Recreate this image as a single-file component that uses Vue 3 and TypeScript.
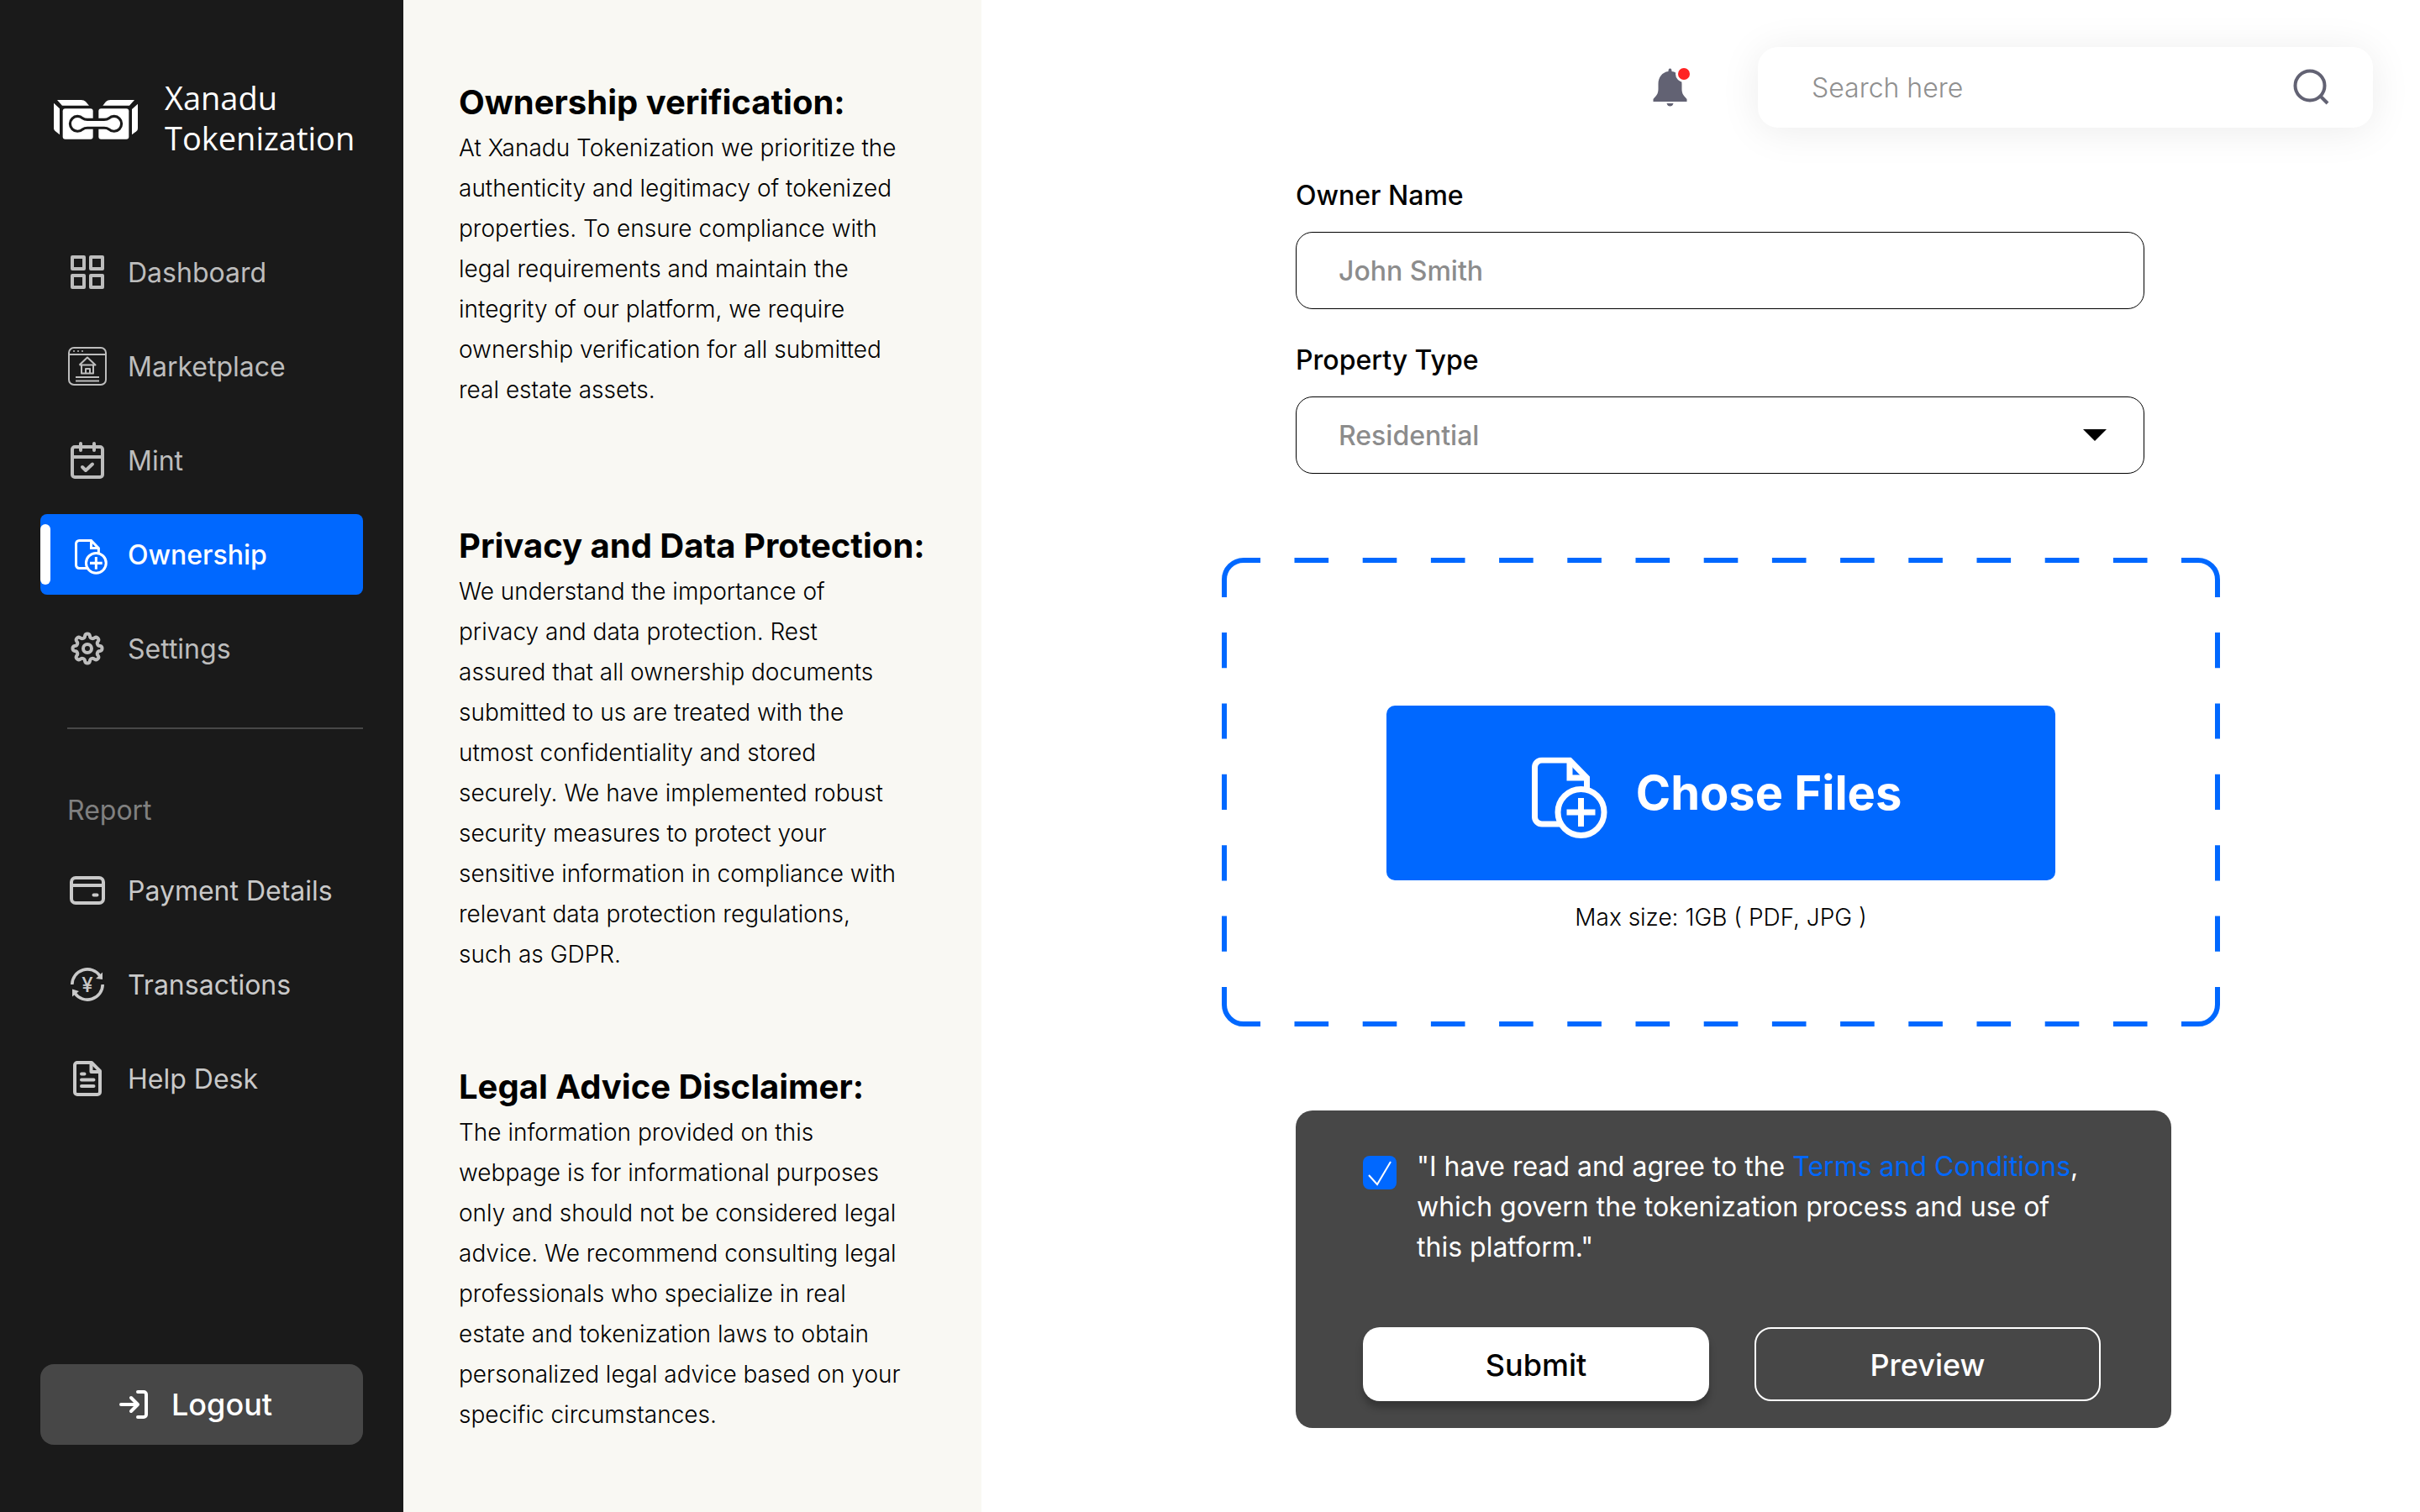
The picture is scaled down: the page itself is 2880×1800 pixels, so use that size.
<script setup lang="ts">
import { ref } from 'vue'

interface Section {
  title: string
  body: string
}

const search = ref('')
const ownerName = ref('')
const propertyType = ref('Residential')
const propertyTypes = ['Residential', 'Commercial', 'Industrial', 'Land']
const agreed = ref(true)

const sections: Section[] = [
  {
    title: 'Ownership verification:',
    body: 'At Xanadu Tokenization we prioritize the authenticity and legitimacy of tokenized properties. To ensure compliance with legal requirements and maintain the integrity of our platform, we require ownership verification for all submitted real estate assets.',
  },
  {
    title: 'Privacy and Data Protection:',
    body: 'We understand the importance of privacy and data protection. Rest assured that all ownership documents submitted to us are treated with the utmost confidentiality and stored securely. We have implemented robust security measures to protect your sensitive information in compliance with relevant data protection regulations, such as GDPR.',
  },
  {
    title: 'Legal Advice Disclaimer:',
    body: 'The information provided on this webpage is for informational purposes only and should not be considered legal advice. We recommend consulting legal professionals who specialize in real estate and tokenization laws to obtain personalized legal advice based on your specific circumstances.',
  },
]

/** Outline of an eight-lobed gear centred in a 48 unit box. */
function gearPath(): string {
  const point = (deg: number): string => {
    const a = (deg * Math.PI) / 180
    return `${(24 + 15.4 * Math.sin(a)).toFixed(2)} ${(24 - 15.4 * Math.cos(a)).toFixed(2)}`
  }
  let d = `M${point(-11)}`
  for (let k = 0; k < 8; k++) {
    d += `A3 3 0 0 1 ${point(k * 45 + 11)}A3.3 3.3 0 0 0 ${point(k * 45 + 34)}`
  }
  return d + 'Z'
}
const gear = gearPath()
</script>

<template>
  <div class="page">
    <svg class="defs" aria-hidden="true">
      <symbol id="file-plus" viewBox="0 0 90 97">
        <g fill="none" stroke="currentColor" stroke-width="7">
          <path d="M65.5 37V24.5L45 3.5H12A8.500 8.500 0 0 0 3.500 12V71A8.500 8.500 0 0 0 12 79.500H34" />
          <path d="M45 3.500V24.500H65.500" />
          <circle cx="58.500" cy="65.500" r="27.500" />
          <path d="M58.500 48.500V82.500M41.500 65.500H75.500" />
        </g>
      </symbol>
    </svg>

    <aside class="sidebar">
      <div class="brand">
        <svg class="brand-mark" viewBox="192 174 300 144" aria-hidden="true">
          <g fill="#fff">
            <path d="M204 177H290Q300 177 306 183L318 197H222Z" />
            <path d="M480 177H394Q384 177 378 183L367 197H462Z" />
            <path d="M192 188L213 208V301L197 288Q192 284 192 278Z" />
            <path d="M492 191L471 210V301L487 289Q492 285 492 278Z" />
            <rect x="224" y="208" width="108" height="109" rx="9" />
            <rect x="352" y="208" width="108" height="109" rx="9" />
            <path
              d="M292 246Q300 252 312 252H372Q384 252 392 246A22 22 0 1 1 392 278Q384 272 372 272H312Q300 272 292 278A22 22 0 1 1 292 246Z"
              stroke="#1a1a1a" stroke-width="19" paint-order="stroke"
            />
          </g>
        </svg>
        <div class="brand-name">Xanadu<br />Tokenization</div>
      </div>

      <nav class="nav" aria-label="Main">
        <a class="nav-item" href="#dashboard">
          <svg class="icon" viewBox="0 0 48 48" aria-hidden="true">
            <g stroke-width="4" stroke-linejoin="round">
              <rect x="6" y="6" width="14" height="14" /><rect x="28" y="6" width="14" height="14" />
              <rect x="6" y="28" width="14" height="14" /><rect x="28" y="28" width="14" height="14" />
            </g>
          </svg>
          Dashboard
        </a>
        <a class="nav-item" href="#marketplace">
          <svg class="icon" viewBox="0 0 48 48" aria-hidden="true">
            <g stroke-width="2">
              <rect x="2" y="2" width="44" height="44" rx="6" />
              <path d="M2 10H46M10 37H38M10 41.500H38" />
              <path d="M14.500 22.500L24 13.500L33.500 22.500H14.500M17 22.500V32.500H31V22.500M22 32V27H27V32" stroke-linejoin="round" />
              <path d="M8 6H8.010M13 6H13.010M18 6H18.010" stroke-linecap="round" />
            </g>
          </svg>
          Marketplace
        </a>
        <a class="nav-item" href="#mint">
          <svg class="icon" viewBox="0 0 48 48" aria-hidden="true">
            <g stroke-width="4" stroke-linecap="round" stroke-linejoin="round">
              <rect x="6" y="8" width="36" height="36" rx="3" />
              <path d="M6 20H42M16 4V12M32 4V12M18 32L22 36L30 28.500" />
            </g>
          </svg>
          Mint
        </a>
        <a class="nav-item active" href="#ownership" aria-current="page">
          <svg class="icon" viewBox="0 0 48 48" aria-hidden="true">
            <use href="#file-plus" x="9" y="6" width="39" height="42" />
          </svg>
          Ownership
        </a>
        <a class="nav-item" href="#settings">
          <svg class="icon" viewBox="0 0 48 48" aria-hidden="true">
            <g stroke-width="4">
              <path :d="gear" stroke-linejoin="round" />
              <circle cx="24" cy="24" r="5" />
            </g>
          </svg>
          Settings
        </a>
      </nav>

      <hr class="rule" />
      <h2 class="group">Report</h2>

      <nav class="nav" aria-label="Report">
        <a class="nav-item bright" href="#payment">
          <svg class="icon" viewBox="0 0 48 48" aria-hidden="true">
            <g stroke-width="4" stroke-linecap="round">
              <rect x="5" y="9" width="38" height="30" rx="5" />
              <path d="M5 18H43M31.500 29.500H35.500" />
            </g>
          </svg>
          Payment Details
        </a>
        <a class="nav-item bright" href="#transactions">
          <svg class="icon" viewBox="0 0 48 48" aria-hidden="true">
            <path d="M5.800 24A18.200 18.200 0 0 1 39 13.800M42.200 24A18.200 18.200 0 0 1 9 34.200" stroke-width="3.600" />
            <path d="M42 9.500V18L34 17ZM6 38.500V29.500L14 32Z" class="solid" />
            <text x="24" y="33" class="yen">¥</text>
          </svg>
          Transactions
        </a>
        <a class="nav-item bright" href="#help">
          <svg class="icon" viewBox="0 0 48 48" aria-hidden="true">
            <g stroke-width="4" stroke-linecap="round" stroke-linejoin="round">
              <path d="M29 5H12A3 3 0 0 0 9 8V40A3 3 0 0 0 12 43H36A3 3 0 0 0 39 40V15Z" />
              <path d="M28.500 6V16H38M17 18.500H20.500M17 25.500H31.500M17 33H31.500" />
            </g>
          </svg>
          Help Desk
        </a>
      </nav>

      <button class="logout" type="button">
        <svg class="logout-icon" viewBox="0 0 34 34" aria-hidden="true">
          <path d="M22 2H29A3 3 0 0 1 32 5V29A3 3 0 0 1 29 32H22M2 17H21M14 9L22 17L14 25" />
        </svg>
        Logout
      </button>
    </aside>

    <section class="info">
      <article v-for="s in sections" :key="s.title" class="info-block">
        <h2>{{ s.title }}</h2>
        <p>{{ s.body }}</p>
      </article>
    </section>

    <main class="main">
      <header class="topbar">
        <button class="bell" type="button" aria-label="Notifications">
          <svg viewBox="0 0 48 48" aria-hidden="true">
            <path
              fill="#626273"
              d="M21.500 1.500C23 1.500 23.500 3 23.500 5C31 6 35.500 12 35.500 20V26C35.500 32 38 34 41.500 38V41H1.500V38C5 34 7.500 32 7.500 26V20C7.500 12 12 6 19.500 5C19.500 3 20 1.500 21.500 1.500ZM17.500 43H25.500Q24.500 46.500 21.500 46.500Q18.500 46.500 17.500 43Z"
            />
            <circle cx="38" cy="8" r="10" fill="#fff" />
            <circle cx="38" cy="8" r="7" fill="#ff2323" />
          </svg>
        </button>
        <label class="search">
          <input v-model="search" type="search" placeholder="Search here" aria-label="Search here" />
          <svg viewBox="0 0 44 44" aria-hidden="true">
            <circle cx="20" cy="20" r="17.500" /><path d="M32.500 32.500L41 41" />
          </svg>
        </label>
      </header>

      <form class="form" @submit.prevent>
        <div class="field">
          <label for="owner">Owner Name</label>
          <input id="owner" v-model="ownerName" class="control" type="text" placeholder="John Smith" />
        </div>
        <div class="field">
          <label for="ptype">Property Type</label>
          <div class="select-wrap">
            <select id="ptype" v-model="propertyType" class="control">
              <option v-for="t in propertyTypes" :key="t">{{ t }}</option>
            </select>
            <svg class="caret" viewBox="0 0 28 14" aria-hidden="true"><path d="M0 0H28L14 14Z" /></svg>
          </div>
        </div>

        <div class="drop">
          <svg class="drop-frame" viewBox="0 0 1188 558" preserveAspectRatio="none" aria-hidden="true">
            <path d="M46 3H26A23 23 0 0 0 3 26V47M1142 3H1162A23 23 0 0 1 1185 26V47M46 555H26A23 23 0 0 1 3 532V511M1142 555H1162A23 23 0 0 0 1185 532V511" />
            <path d="M86.500 3H1101.500M86.500 555H1101.500" stroke-dasharray="40.600" />
            <path d="M3 89V469M1185 89V469" stroke-dasharray="42.200" />
          </svg>
          <button class="choose" type="button">
            <svg viewBox="0 0 90 97" aria-hidden="true"><use href="#file-plus" /></svg>
            Chose Files
          </button>
          <p class="hint">Max size: 1GB ( PDF, JPG )</p>
        </div>

        <div class="consent">
          <div class="agree">
            <span class="tick">
              <input id="agree" v-model="agreed" type="checkbox" />
              <svg v-if="agreed" viewBox="0 0 40 40" aria-hidden="true"><path d="M7 23L17 34L33 7" /></svg>
            </span>
            <label for="agree">"I have read and agree to the <a href="#terms">Terms and Conditions</a>, which govern the tokenization process and use of this platform."</label>
          </div>
          <div class="actions">
            <button class="btn solid-btn" type="submit">Submit</button>
            <button class="btn line-btn" type="button">Preview</button>
          </div>
        </div>
      </form>
    </main>
  </div>
</template>

<style>
body {
  margin: 0;
  background: #fff;
}
</style>

<style scoped>
.page {
  display: flex;
  min-height: 100vh;
  font-family: Inter, 'Liberation Sans', sans-serif;
  color: #000;
}
.page *,
.page {
  box-sizing: border-box;
}
button,
input,
select {
  font: inherit;
  color: inherit;
  margin: 0;
}
button {
  cursor: pointer;
  border: 0;
  padding: 0;
  background: none;
}
h2,
p {
  margin: 0;
}
.defs {
  position: absolute;
  width: 0;
  height: 0;
}

/* Sidebar */
.sidebar {
  flex: 0 0 480px;
  min-width: 0;
  display: flex;
  flex-direction: column;
  padding: 92px 48px 80px;
  background: #1a1a1a;
}
.brand {
  display: flex;
  align-items: center;
  gap: 32px;
  padding-left: 16px;
  margin-bottom: 88px;
}
.brand-mark {
  flex: none;
  width: 100px;
  height: 48px;
  margin-top: 4px;
}
.brand-name {
  font-family: 'Open Sans', 'Noto Sans', sans-serif;
  font-size: 38px;
  line-height: 48px;
  font-weight: 400;
  color: #fff;
}
.nav {
  display: flex;
  flex-direction: column;
  gap: 16px;
}
.nav-item {
  position: relative;
  display: flex;
  align-items: center;
  gap: 24px;
  height: 96px;
  padding-left: 32px;
  border-radius: 8px;
  font-size: 32px;
  font-weight: 400;
  color: #bdbdbd;
  text-decoration: none;
  white-space: nowrap;
}
.nav-item.bright {
  color: #c9c9c9;
}
.nav-item.active {
  background: #0068ff;
  color: #fff;
  font-weight: 500;
}
.nav-item.active::before {
  content: '';
  position: absolute;
  left: 0;
  top: 12px;
  width: 12px;
  height: 72px;
  border-radius: 6px;
  background: #fff;
}
.icon {
  width: 48px;
  height: 48px;
  fill: none;
  stroke: currentColor;
}
.icon .solid {
  fill: currentColor;
  stroke: none;
}
.yen {
  fill: currentColor;
  stroke: none;
  font-size: 24px;
  font-weight: 500;
  text-anchor: middle;
}
.rule {
  width: 352px;
  height: 2px;
  margin: 46px 0 73px 32px;
  border: 0;
  background: #484848;
}
.group {
  padding-left: 32px;
  margin-bottom: 23px;
  font-size: 32px;
  line-height: 48px;
  font-weight: 400;
  color: #808080;
}
.logout {
  display: flex;
  align-items: center;
  gap: 28px;
  height: 96px;
  margin-top: auto;
  padding-left: 94px;
  border-radius: 16px;
  background: #474747;
  color: #fff;
  font-size: 36px;
  font-weight: 500;
}
.logout-icon {
  width: 34px;
  height: 34px;
  fill: none;
  stroke: #fff;
  stroke-width: 4;
  stroke-linecap: round;
  stroke-linejoin: round;
}

/* Explanatory column */
.info {
  flex: 0 0 688px;
  min-width: 0;
  padding: 92px 64px 80px 66px;
  background: #f9f8f3;
}
.info-block + .info-block {
  margin-top: 132px;
}
.info-block:last-child {
  margin-top: 104px;
}
.info h2 {
  font-size: 40px;
  line-height: 60px;
  font-weight: 700;
  white-space: nowrap;
}
.info p {
  max-width: 532px;
  font-size: 28px;
  line-height: 48px;
  font-weight: 300;
}

/* Main area */
.main {
  flex: 1;
  min-width: 0;
  padding: 56px 56px 100px 286px;
}
.topbar {
  display: flex;
  justify-content: flex-end;
  align-items: center;
  gap: 78px;
  margin-bottom: 61px;
}
.bell svg {
  display: block;
  width: 48px;
  height: 48px;
}
.search {
  display: flex;
  align-items: center;
  width: 732px;
  height: 96px;
  padding: 0 51px 0 64px;
  border-radius: 24px;
  background: #fff;
  box-shadow: 0 4px 48px rgba(0, 0, 0, 0.08);
}
.search input {
  flex: 1;
  min-width: 0;
  padding: 0;
  border: 0;
  outline: 0;
  background: none;
  font-size: 32px;
  font-weight: 300;
  appearance: none;
}
.search input::placeholder {
  color: #909090;
}
.search svg {
  width: 44px;
  height: 44px;
  fill: none;
  stroke: #626273;
  stroke-width: 4;
}
.form {
  margin-right: 182px;
}
.field {
  display: flex;
  flex-direction: column;
  gap: 23px;
  margin: 0 90px 41px 88px;
}
.field label {
  font-size: 32px;
  line-height: 40px;
  font-weight: 500;
}
.control {
  display: block;
  width: 100%;
  height: 92px;
  padding: 0 50px;
  border: 1px solid #000;
  border-radius: 20px;
  background: #fff;
  font-size: 32px;
  font-weight: 500;
  color: #8c8c8c;
  appearance: none;
}
.control::placeholder {
  color: #8c8c8c;
}
.select-wrap {
  position: relative;
}
.caret {
  position: absolute;
  right: 45px;
  top: 39px;
  width: 28px;
  height: 14px;
  pointer-events: none;
}
.drop {
  position: relative;
  margin: 100px 0;
  padding: 176px 196px 106px;
}
.drop-frame {
  position: absolute;
  inset: 0;
  width: 100%;
  height: 100%;
  fill: none;
  stroke: #0068ff;
  stroke-width: 6;
}
.choose {
  position: relative;
  display: flex;
  align-items: center;
  justify-content: center;
  gap: 34px;
  width: 100%;
  height: 208px;
  padding-right: 10px;
  border-radius: 10px;
  background: #0068ff;
  color: #fff;
  font-size: 56px;
  font-weight: 700;
}
.choose svg {
  width: 90px;
  height: 98px;
  margin-top: 12px;
}
.hint {
  margin-top: 20px;
  font-size: 28px;
  line-height: 48px;
  font-weight: 300;
  text-align: center;
}
.consent {
  margin: 0 58px 0 88px;
  padding: 43px 84px 32px 80px;
  border-radius: 20px;
  background: #474747;
  color: #fff;
}
.agree {
  display: flex;
  gap: 24px;
  margin-bottom: 71px;
  padding-right: 20px;
  font-size: 32px;
  line-height: 48px;
  font-weight: 400;
}
.agree a {
  color: #0068ff;
  text-decoration: none;
}
.tick {
  position: relative;
  flex: 0 0 40px;
  height: 40px;
  margin-top: 11px;
}
.tick input {
  display: block;
  width: 40px;
  height: 40px;
  border-radius: 8px;
  background: #fff;
  appearance: none;
}
.tick input:checked {
  background: #0068ff;
}
.tick svg {
  position: absolute;
  inset: 0;
  fill: none;
  stroke: #fff;
  stroke-width: 2;
  pointer-events: none;
}
.actions {
  display: grid;
  grid-template-columns: 1fr 1fr;
  gap: 54px;
}
.btn {
  height: 88px;
  padding-top: 2px;
  border-radius: 20px;
  font-size: 36px;
  font-weight: 500;
}
.solid-btn {
  background: #fff;
  color: #000;
  box-shadow: 0 8px 8px rgba(0, 0, 0, 0.25);
}
.line-btn {
  border: 2px solid #fff;
  color: #fff;
}
</style>
